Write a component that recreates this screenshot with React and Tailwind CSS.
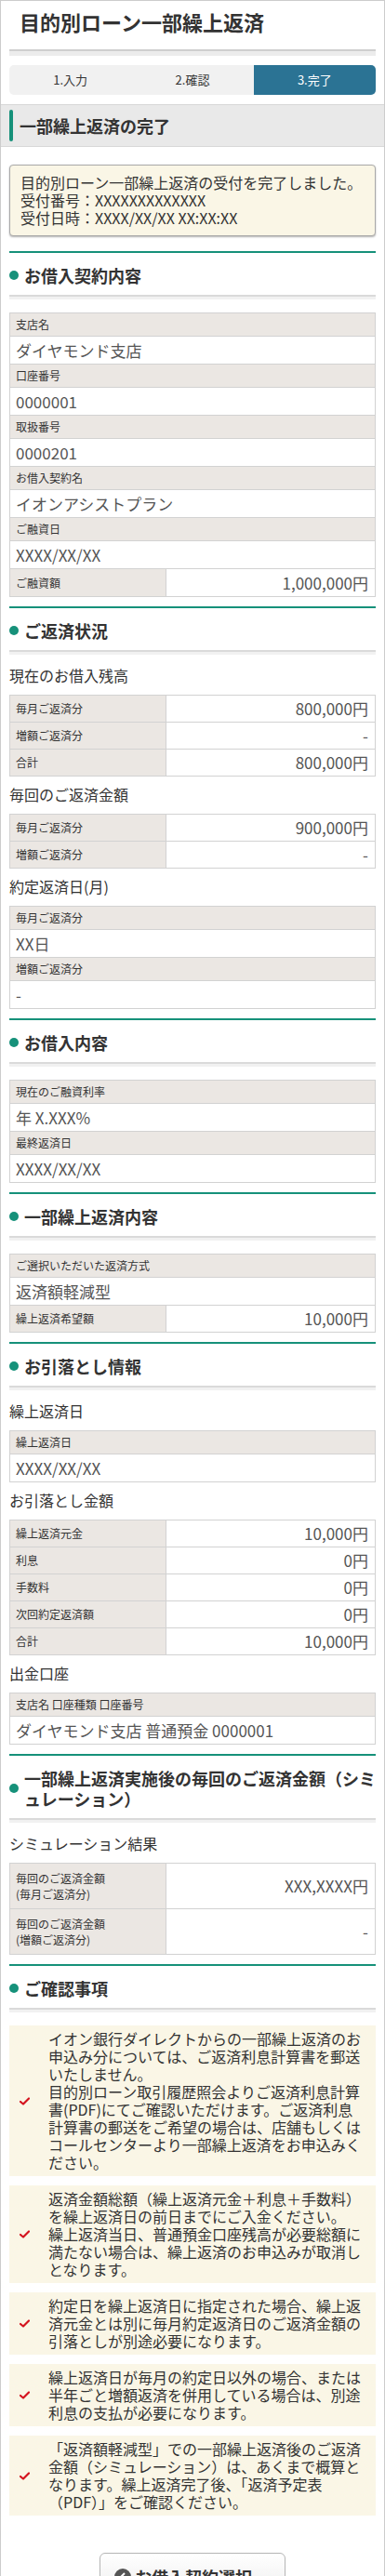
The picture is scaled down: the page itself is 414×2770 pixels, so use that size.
// 目的別ローン一部繰上返済 - 完了画面

import React from 'react';

const FONT = { fontFamily: '"Noto Sans CJK JP", "Noto Sans", sans-serif' };

// Label row on top, value row below
function StackRow({ label, value }) {
    return (
        <>
            <div className="h-[24px] box-content border-b border-[#d2d2d2] bg-[#ebe7e3] px-[6px] text-[12px] leading-[24px] text-[#333]">
                {label}
            </div>
            <div className="h-[29px] box-content border-b border-[#d2d2d2] bg-white px-[6px] text-[17px] leading-[29px] text-[#555]">
                {value}
            </div>
        </>
    );
}

// Label cell on the left, value right-aligned
function PairRow({ label, value, tall }) {
    return (
        <div className={`flex box-content border-b border-[#d2d2d2] ${tall ? 'h-[29px]' : 'h-[28px]'}`}>
            <div className="w-[168px] shrink-0 border-r border-[#d2d2d2] bg-[#ebe7e3] px-[6px] flex items-center text-[12px] text-[#333]">
                {label}
            </div>
            <div className="flex-1 flex items-center justify-end pr-[7px] text-[17px] text-[#555]">
                {value}
            </div>
        </div>
    );
}

function Table({ children, first }) {
    return (
        <div className={`border-x border-t border-[#d2d2d2] ${first ? 'mt-[14px]' : ''}`}>
            {children}
        </div>
    );
}

function Sub({ children, first }) {
    return (
        <p className={`${first ? 'pt-[10px]' : 'pt-[7px]'} pb-[9px] text-[16px] leading-[24px] text-[#333]`}>
            {children}
        </p>
    );
}

function Section({ title, children }) {
    return (
        <section className="mt-[10px] border-t-2 border-[#16917a]">
            <h2 className="flex items-center gap-[6px] pt-[13px] pb-[10px]">
                <span className="w-[10px] h-[10px] rounded-full bg-[#16917a] shrink-0" />
                <span className="text-[18px] font-bold leading-[22px] text-[#333]">{title}</span>
            </h2>
            <div className="h-[2px] bg-[#dadada]" />
            <div className="h-[3px] bg-[#f1f1f1]" />
            {children}
        </section>
    );
}

function Check() {
    return (
        <svg width="11" height="9" viewBox="0 0 11 9" className="shrink-0">
            <path d="M1 5 L4 7.5 L10 1.5" fill="none" stroke="#d4131e" strokeWidth="2.2" strokeLinecap="round" strokeLinejoin="round" />
        </svg>
    );
}

const notes = [
    [
        'イオン銀行ダイレクトからの一部繰上返済のお',
        '申込み分については、ご返済利息計算書を郵送',
        'いたしません。',
        '目的別ローン取引履歴照会よりご返済利息計算',
        '書(PDF)にてご確認いただけます。ご返済利息',
        '計算書の郵送をご希望の場合は、店舗もしくは',
        'コールセンターより一部繰上返済をお申込みく',
        'ださい。',
    ],
    [
        '返済金額総額（繰上返済元金＋利息＋手数料）',
        'を繰上返済日の前日までにご入金ください。',
        '繰上返済当日、普通預金口座残高が必要総額に',
        '満たない場合は、繰上返済のお申込みが取消し',
        'となります。',
    ],
    [
        '約定日を繰上返済日に指定された場合、繰上返',
        '済元金とは別に毎月約定返済日のご返済金額の',
        '引落としが別途必要になります。',
    ],
    [
        '繰上返済日が毎月の約定日以外の場合、または',
        '半年ごと増額返済を併用している場合は、別途',
        '利息の支払が必要になります。',
    ],
    [
        '「返済額軽減型」での一部繰上返済後のご返済',
        '金額（シミュレーション）は、あくまで概算と',
        'なります。繰上返済完了後、「返済予定表',
        '（PDF）」をご確認ください。',
    ],
];

const steps = ['1.入力', '2.確認', '3.完了'];

export default function App() {
    return (
        <div className="min-h-screen bg-white border border-[#cccccc] text-[#333]" style={FONT}>

            {/* Page title */}
            <div className="px-[9px]">
                <h1 className="pl-[11px] pt-[7px] pb-[15px] text-[22px] font-bold leading-[30px] text-[#333]">
                    目的別ローン一部繰上返済
                </h1>
                <div className="h-[2px] bg-[#cfcfcf]" />
                <div className="h-[5px] bg-[#ececec]" />

                {/* Steps */}
                <div className="mt-[10px] grid grid-cols-3 h-[32px] rounded-[5px] bg-[#f1f1f1] overflow-hidden text-[13px]">
                    {steps.map((s, i) => (
                        <div
                            key={s}
                            className={`flex items-center justify-center ${i === 2 ? 'bg-[#2b7394] text-white' : 'text-[#333]'}`}
                        >
                            {s}
                        </div>
                    ))}
                </div>
            </div>

            {/* Completion bar */}
            <div className="mt-[10px] h-[46px] border-y border-[#d8d8d8] bg-[#e9e9e9] flex items-center pl-[9px]">
                <span className="w-[4px] h-[34px] rounded-full bg-[#16917a]" />
                <span className="ml-[7px] text-[18px] font-bold text-[#333]">一部繰上返済の完了</span>
            </div>

            <div className="px-[9px]">

                {/* Message */}
                <div className="mt-[19px] rounded-[4px] border border-[#a9a9a9] bg-[#faf6e6] px-[11px] py-[9px] text-[16px] leading-[19px] text-[#333] shadow-[0_1px_2px_rgba(0,0,0,0.3)]">
                    <p>目的別ローン一部繰上返済の受付を完了しました。</p>
                    <p>受付番号：XXXXXXXXXXXXX</p>
                    <p>受付日時：XXXX/XX/XX XX:XX:XX</p>
                </div>

                <div className="h-[6px]" />

                <Section title="お借入契約内容">
                    <Table first>
                        <StackRow label="支店名" value="ダイヤモンド支店" />
                        <StackRow label="口座番号" value="0000001" />
                        <StackRow label="取扱番号" value="0000201" />
                        <StackRow label="お借入契約名" value="イオンアシストプラン" />
                        <StackRow label="ご融資日" value="XXXX/XX/XX" />
                        <PairRow label="ご融資額" value="1,000,000円" tall />
                    </Table>
                </Section>

                <Section title="ご返済状況">
                    <Sub first>現在のお借入残高</Sub>
                    <Table>
                        <PairRow label="毎月ご返済分" value="800,000円" />
                        <PairRow label="増額ご返済分" value="-" />
                        <PairRow label="合計" value="800,000円" />
                    </Table>
                    <Sub>毎回のご返済金額</Sub>
                    <Table>
                        <PairRow label="毎月ご返済分" value="900,000円" />
                        <PairRow label="増額ご返済分" value="-" />
                    </Table>
                    <Sub>約定返済日(月)</Sub>
                    <Table>
                        <StackRow label="毎月ご返済分" value="XX日" />
                        <StackRow label="増額ご返済分" value="-" />
                    </Table>
                </Section>

                <Section title="お借入内容">
                    <Table first>
                        <StackRow label="現在のご融資利率" value="年 X.XXX%" />
                        <StackRow label="最終返済日" value="XXXX/XX/XX" />
                    </Table>
                </Section>

                <Section title="一部繰上返済内容">
                    <Table first>
                        <StackRow label="ご選択いただいた返済方式" value="返済額軽減型" />
                        <PairRow label="繰上返済希望額" value="10,000円" />
                    </Table>
                </Section>

                <Section title="お引落とし情報">
                    <Sub first>繰上返済日</Sub>
                    <Table>
                        <StackRow label="繰上返済日" value="XXXX/XX/XX" />
                    </Table>
                    <Sub>お引落とし金額</Sub>
                    <Table>
                        <PairRow label="繰上返済元金" value="10,000円" />
                        <PairRow label="利息" value="0円" />
                        <PairRow label="手数料" value="0円" />
                        <PairRow label="次回約定返済額" value="0円" />
                        <PairRow label="合計" value="10,000円" />
                    </Table>
                    <Sub>出金口座</Sub>
                    <Table>
                        <StackRow label="支店名 口座種類 口座番号" value="ダイヤモンド支店 普通預金 0000001" />
                    </Table>
                </Section>

                <Section
                    title={
                        <>
                            <span className="block whitespace-nowrap">一部繰上返済実施後の毎回のご返済金額（シミ</span>
                            <span className="block whitespace-nowrap">ュレーション）</span>
                        </>
                    }
                >
                    <Sub first>シミュレーション結果</Sub>
                    <Table>
                        <div className="flex border-b border-[#d2d2d2]">
                            <div className="w-[168px] shrink-0 border-r border-[#d2d2d2] bg-[#ebe7e3] px-[6px] py-[7px] text-[12px] leading-[17px]">
                                毎回のご返済金額<br />(毎月ご返済分)
                            </div>
                            <div className="flex-1 flex items-center justify-end pr-[7px] text-[17px] text-[#555]">
                                XXX,XXXX円
                            </div>
                        </div>
                        <div className="flex border-b border-[#d2d2d2]">
                            <div className="w-[168px] shrink-0 border-r border-[#d2d2d2] bg-[#ebe7e3] px-[6px] py-[7px] text-[12px] leading-[17px]">
                                毎回のご返済金額<br />(増額ご返済分)
                            </div>
                            <div className="flex-1 flex items-center justify-end pr-[7px] text-[17px] text-[#555]">
                                -
                            </div>
                        </div>
                    </Table>
                </Section>

                <Section title="ご確認事項">
                    <div className="mt-[14px] space-y-[10px]">
                        {notes.map((lines, i) => (
                            <div key={i} className="flex items-center bg-[#faf6e6] py-[5px]">
                                <div className="w-[42px] shrink-0 pl-[11px]">
                                    <Check />
                                </div>
                                <div className="text-[16px] leading-[19px] text-[#333]">
                                    {lines.map((l) => (
                                        <span key={l} className="block whitespace-nowrap">{l}</span>
                                    ))}
                                </div>
                            </div>
                        ))}
                    </div>
                </Section>

                {/* Back button */}
                <div className="mt-[40px] pb-[40px] flex justify-center">
                    <button className="w-[200px] h-[52px] rounded-[6px] border border-[#b5b5b5] bg-gradient-to-b from-white to-[#ececec] flex items-center pl-[15px] gap-[4px]">
                        <span className="w-[18px] h-[18px] rounded-full bg-[#555] flex items-center justify-center">
                            <svg width="8" height="10" viewBox="0 0 8 10">
                                <path d="M6 1 L2 5 L6 9" fill="none" stroke="#fff" strokeWidth="2" />
                            </svg>
                        </span>
                        <span className="text-[18px] font-bold text-[#333]">お借入契約選択</span>
                    </button>
                </div>
            </div>
        </div>
    );
}
